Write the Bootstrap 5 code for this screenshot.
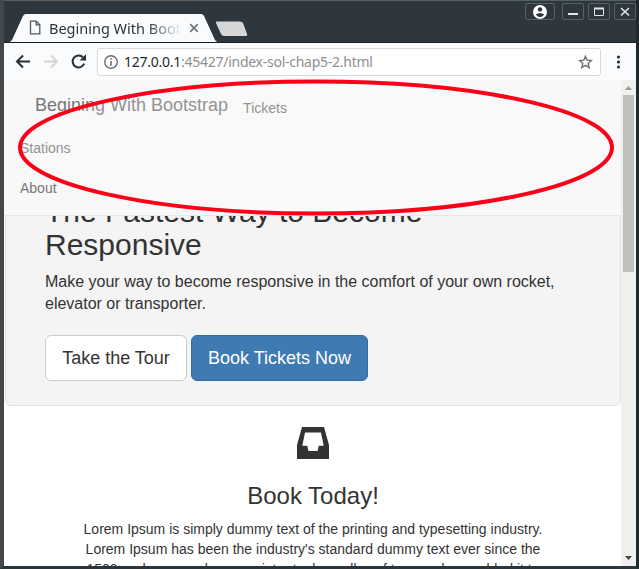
<!DOCTYPE html>
<html lang="en">
<head>
<meta charset="utf-8">
<title>Begining With Bootstrap</title>
<link rel="stylesheet" href="https://cdn.jsdelivr.net/npm/bootstrap@5.3.0/dist/css/bootstrap.min.css">
<style>
body{width:639px;height:569px;overflow:hidden;background:#2d373d;font-family:"Liberation Sans",Arial,sans-serif;font-size:14px;line-height:20px;color:#333}
.win{width:639px;height:569px;border-left:4px solid #42484b;border-right:3px solid #20292e;border-bottom:3px solid #2b353a}
.frame-top{height:43px;border-top:1px solid #526066;border-bottom:1px solid #1b2226;flex:none}
.tabs{margin-left:6px}
.tab-box{width:206px;height:29px}
.tab-shape{left:0;top:0;z-index:0}
.tab-inner{position:relative;height:29px;padding-left:19px}
.tab-title{font:14.5px/28px "Noto Sans",sans-serif;color:#2e3436;width:133px;margin-left:8px;overflow:hidden;white-space:nowrap;letter-spacing:0;-webkit-mask-image:linear-gradient(90deg,#000 74%,transparent 100%);mask-image:linear-gradient(90deg,#000 74%,transparent 100%)}
.tab-close{margin-left:7px}
.wbtn{width:22px;height:17px;border:1px solid #566167;border-radius:2px}
.wbtn.user{width:30px;margin-right:3px}
.controls{gap:4px;padding:2px 0 0;margin-right:0}
.toolbar{height:37px;background:#fafbfd;flex:none;padding-left:10px}
.addr{width:504px;height:28px;border:1px solid #d7d9dc;border-radius:3px;background:#fff;margin-left:9px;padding:0 7px 0 6px}
.url{font:14px/26px "Noto Sans",sans-serif;color:#8b8f91;margin-left:6px;letter-spacing:-.26px;white-space:nowrap}
.url b{font-weight:400;color:#24292b}
.dots{margin-left:15px}
.viewport{height:486px;background:#fff}
.page{width:617px;height:486px;overflow:hidden}
.topnav{height:136px;background:#f8f8f8;border-bottom:1px solid #e7e7e7;position:relative;z-index:2;color:#777}
.brand{font-size:18px;padding-left:31px;line-height:20px;margin-top:15px}
.nav-first{margin-top:18px;padding-left:15px}
.nav-links{margin-top:20px}
.nav-next{padding-left:16px;height:40px;line-height:20px}
.hero{margin:-61px 0 0 1px;padding:39px;height:251px;border:1px solid #e3e3e3;border-radius:6px;background:#f4f4f4;font-size:16px;line-height:22px}
.hero h1{font-size:30px;line-height:33px;font-weight:400;margin:0 0 10px}
.hero p{margin:0 0 20px;width:530px}
.hero-btn{height:46px;font-size:18px;line-height:24px;padding:10px 0;border-radius:6px}
.tour{width:142px;background:#fff;border-color:#ccc;color:#333}
.book{width:177px;background:#3f7ab3;border-color:#366d9f;color:#fff}
.feature{padding:21px 0 0 1px}
.feature h2{font-size:24px;line-height:26px;font-weight:400;margin:24px 0 10px}
.feature p{width:500px;margin:0 auto;white-space:nowrap}
.scroll{width:15px;background:#f0f0f0}
.thumb{width:11px;height:177px;background:#bfbfbf}
.ring{left:0;top:0;z-index:5;pointer-events:none}
svg{display:block;flex:none}
</style>
<script src="https://cdn.jsdelivr.net/npm/bootstrap@5.3.0/dist/js/bootstrap.bundle.min.js"></script>
</head>
<body class="position-relative">
<div class="win d-flex flex-column">
  <header class="frame-top d-flex justify-content-between">
    <div class="tabs d-flex align-items-end">
      <div class="tab-box position-relative">
        <svg class="tab-shape position-absolute" width="208" height="29"><path d="M0 29L2 27L13 3Q14 1 16 1H191Q193 1 194 3L205 27L207 29Z" fill="#fafbfd"/></svg>
        <div class="tab-inner d-flex align-items-center">
          <svg width="12" height="15" viewBox="0 0 12 15"><path d="M1.5 1.2H7.2L10.8 4.8V13.8H1.5ZM7.2 1.2V4.8H10.8" fill="none" stroke="#555b5e" stroke-width="1.3"/></svg>
          <div class="tab-title">Begining With Bootstrap</div>
          <svg class="tab-close" width="10" height="10"><path d="M1.2 1.2L8.8 8.8M8.8 1.2L1.2 8.8" stroke="#73797c" stroke-width="1.8"/></svg>
        </div>
      </div>
      <svg width="33" height="29"><path d="M-1 8.5H24Q26 8.5 27 10L31 21Q31.5 23 30 23H8Q6 23 5 21L0 10Z" fill="#d4d6d8"/></svg>
    </div>
    <div class="controls d-flex">
      <div class="wbtn user d-flex align-items-center justify-content-center"><svg width="14" height="14"><circle cx="7" cy="7" r="7" fill="#fff"/><circle cx="7" cy="4.4" r="2.2" fill="#2d373d"/><path d="M2.8 9.4Q7 6.4 11.2 9.4Q9.5 12 7 12T2.8 9.4Z" fill="#2d373d"/></svg></div>
      <div class="wbtn"><svg width="20" height="15"><path d="M5 10H15" stroke="#e3e6e5" stroke-width="2"/></svg></div>
      <div class="wbtn"><svg width="20" height="15"><path d="M5.5 4V11.5H14.5V4" fill="none" stroke="#e3e6e5"/><path d="M5 4.5H15" stroke="#e3e6e5" stroke-width="2"/></svg></div>
      <div class="wbtn"><svg width="20" height="15"><path d="M6 4L14 11.5M14 4L6 11.5" stroke="#e3e6e5" stroke-width="1.6"/></svg></div>
    </div>
  </header>
  <div class="toolbar d-flex align-items-center">
    <svg width="74" height="18" viewBox="0 0 74 18"><g fill="none" stroke-width="2"><path d="M16 8.5H3M9 2.5L3 8.5L9 14.5" stroke="#282e31"/><path d="M30 8.5H43M37 2.5L43 8.5L37 14.5" stroke="#d2d4d6"/><path d="M70.2 10.7A6 6 0 1 1 69 4.3" stroke="#282e31"/></g><path d="M72 1.3V7.5H65.6Z" fill="#282e31"/></svg>
    <div class="addr d-flex align-items-center">
      <svg width="14" height="14"><circle cx="7" cy="7" r="6.2" fill="none" stroke="#676c6f" stroke-width="1.4"/><path d="M7 6V10.8M7 3.2V4.8" stroke="#676c6f" stroke-width="1.6"/></svg>
      <div class="url"><b>127.0.0.1</b>:45427/index-sol-chap5-2.html</div>
      <svg class="ms-auto" width="15" height="14" viewBox="0 0 15 14"><path d="M7.5 1.2L9.1 5.2L13.4 5.6L10.2 8.5L11.2 12.6L7.5 10.4L3.8 12.6L4.8 8.5L1.6 5.6L5.9 5.2Z" fill="none" stroke="#6c7174" stroke-width="1.4"/></svg>
    </div>
    <svg class="dots" width="5" height="14"><g fill="#282e31"><circle cx="2.5" cy="2" r="1.6"/><circle cx="2.5" cy="7" r="1.6"/><circle cx="2.5" cy="12" r="1.6"/></g></svg>
  </div>
  <div class="viewport d-flex">
    <main class="page">
      <nav class="topnav">
        <div class="d-flex"><div class="brand">Begining With Bootstrap</div><div class="nav-first">Tickets</div></div>
        <div class="nav-links">
          <div class="nav-next">Stations</div>
          <div class="nav-next">About</div>
        </div>
      </nav>
      <section class="hero">
        <h1>The Fastest Way to Become<br>Responsive</h1>
        <p>Make your way to become responsive in the comfort of your own rocket, elevator or transporter.</p>
        <div class="d-flex gap-1"><button class="btn hero-btn tour">Take the Tour</button><button class="btn hero-btn book">Book Tickets Now</button></div>
      </section>
      <section class="feature text-center">
        <svg class="mx-auto" width="32" height="32" viewBox="0 0 32 32"><path fill-rule="evenodd" d="M5 0H27L32 18V32H0V18ZM8 5.5L5.3 18.7H10.2L11.5 24H20.5L21.8 18.7H26.7L24 5.5Z" fill="#333"/></svg>
        <h2>Book Today!</h2>
        <p>Lorem Ipsum is simply dummy text of the printing and typesetting industry.<br>Lorem Ipsum has been the industry's standard dummy text ever since the<br>1500s, when an unknown printer took a galley of type and scrambled it to</p>
      </section>
    </main>
    <div class="scroll d-flex flex-column align-items-center justify-content-between">
      <div><svg class="mx-auto" width="11" height="15"><path d="M2 10L5.5 6L9 10Z" fill="#999"/></svg><div class="thumb"></div></div>
      <svg width="11" height="16"><path d="M2 6L5.5 10L9 6Z" fill="#444"/></svg>
    </div>
  </div>
</div>
<svg class="ring position-absolute" width="639" height="220"><ellipse cx="316" cy="147.5" rx="296" ry="66" fill="#fff" fill-opacity=".2" stroke="#fc0019" stroke-width="4"/></svg>
</body>
</html>
